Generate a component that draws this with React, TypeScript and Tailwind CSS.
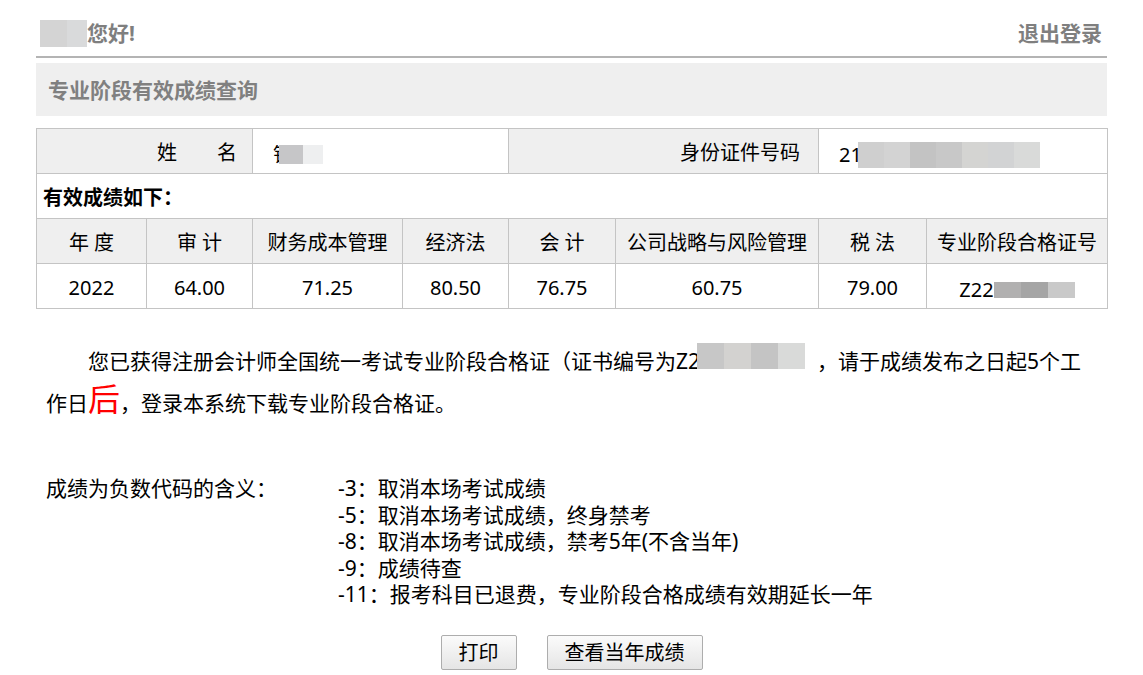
import React from "react";

const FONT = "font-['Noto_Sans','Noto_Sans_CJK_SC',sans-serif]";

function Blocks({ colors, w, h }: { colors: string[]; w: number; h: number }) {
  return (
    <span className="inline-flex align-middle">
      {colors.map((c, i) => (
        <span key={i} style={{ backgroundColor: c, width: w, height: h }} className="inline-block" />
      ))}
    </span>
  );
}

const td = "border border-[#c4c4c4] h-[45px] p-0 pt-[3px] text-[20px] leading-[41px] text-black";

export default function App() {
  return (
    <div className={`${FONT} bg-white w-[1143px] h-[675px] overflow-hidden`}>
      <div className="px-[36px]">
        {/* header */}
        <div className="h-[56px] flex items-center justify-between pl-[4px] pr-[5px] pt-[10px]">
          <div className="flex items-center">
            <span className="inline-block w-[27px] h-[27px] bg-[#d4d4d4]" />
            <span className="inline-block w-[20px] h-[27px] bg-[#d9dadb]" />
            <span className="text-[21px] font-bold text-[#7f7f7f] leading-[28px]">您好!</span>
          </div>
          <span className="text-[21px] font-bold text-[#7f7f7f] leading-[28px]">退出登录</span>
        </div>
        <div className="h-[2px] bg-[#b4b4b4]" />
        <div className="mt-[5px] h-[53px] bg-[#efefef] flex items-center pl-[12px]">
          <span className="text-[21px] font-bold text-[#808080] leading-[28px]">专业阶段有效成绩查询</span>
        </div>

        {/* table */}
        <table className="mt-[12px] w-[1071px] border-collapse table-fixed">
          <colgroup>
            <col className="w-[110px]" />
            <col className="w-[106px]" />
            <col className="w-[150px]" />
            <col className="w-[106px]" />
            <col className="w-[107px]" />
            <col className="w-[203px]" />
            <col className="w-[108px]" />
            <col className="w-[181px]" />
          </colgroup>
          <tbody>
            <tr>
              <td colSpan={2} className={`${td} bg-[#efefef] text-right pr-[15px]`}>
                姓　　名
              </td>
              <td colSpan={2} className={`${td} pl-[20px]`}>
                <span className="inline-flex items-center align-middle">
                  <span className="inline-block w-[6px] overflow-hidden whitespace-nowrap leading-[20px]">钱</span>
                  <span className="inline-block w-[24px] h-[19px] bg-[#c6c6c8]" />
                  <span className="inline-block w-[20px] h-[19px] bg-[#eeeff0]" />
                </span>
              </td>
              <td colSpan={2} className={`${td} bg-[#efefef] text-right pr-[18px]`}>
                身份证件号码
              </td>
              <td colSpan={2} className={`${td} pl-[20px]`}>
                <span className="inline-flex items-center align-middle">
                  <span className="leading-[20px]">21</span>
                  <span className="-ml-[4px] inline-flex">
                    <Blocks
                      colors={["#cfcfcf", "#d3d3d3", "#c3c3c3", "#c8c8c8", "#d4d4d2", "#d2d3d4", "#d9dad9"]}
                      w={26}
                      h={26}
                    />
                  </span>
                </span>
              </td>
            </tr>
            <tr>
              <td colSpan={8} className={`${td} pl-[6px] font-bold`}>
                有效成绩如下：
              </td>
            </tr>
            <tr className="bg-[#efefef]">
              {["年 度", "审 计", "财务成本管理", "经济法", "会 计", "公司战略与风险管理", "税 法", "专业阶段合格证号"].map(
                (t) => (
                  <td key={t} className={`${td} text-center whitespace-nowrap`}>
                    {t}
                  </td>
                )
              )}
            </tr>
            <tr>
              {["2022", "64.00", "71.25", "80.50", "76.75", "60.75", "79.00"].map((t, i) => (
                <td key={i} className={`${td} text-center`}>
                  {t}
                </td>
              ))}
              <td className={`${td} text-center`}>
                <span className="inline-flex items-center align-middle">
                  <span className="leading-[20px]">Z22</span>
                  <Blocks colors={["#b1b0b0", "#a5a5a5", "#c9c9c9"]} w={27} h={16} />
                </span>
              </td>
            </tr>
          </tbody>
        </table>

        {/* paragraph */}
        <div className="mt-[30px] px-[10px] text-[21px] text-black">
          <div className="indent-[42px] whitespace-nowrap leading-[44px]">
            您已获得注册会计师全国统一考试专业阶段合格证（证书编号为Z2
            <span className="-ml-[3px] inline-flex">
              <Blocks colors={["#c7c7c7", "#d3d2d0", "#c4c4c4", "#d9dad9"]} w={27} h={26} />
            </span>
            <span className="inline-block w-[12px]" />，请于成绩发布之日起5个工
          </div>
          <div className="whitespace-nowrap h-[42px] leading-[40px]">
            作日<span className="text-[32px] text-[#ff0000] leading-[1px]">后</span>，登录本系统下载专业阶段合格证。
          </div>
        </div>

        {/* legend */}
        <div className="mt-[50px] pl-[10px] flex text-[21px] leading-[26.5px] text-black">
          <div className="w-[292px] shrink-0">成绩为负数代码的含义：</div>
          <div className="flex flex-col">
            <div>-3：取消本场考试成绩</div>
            <div>-5：取消本场考试成绩，终身禁考</div>
            <div>-8：取消本场考试成绩，禁考5年(不含当年)</div>
            <div>-9：成绩待查</div>
            <div>-11：报考科目已退费，专业阶段合格成绩有效期延长一年</div>
          </div>
        </div>

        {/* buttons */}
        <div className="mt-[27px] flex justify-center gap-[30px]">
          <button className="w-[76px] h-[35px] border border-[#adadad] rounded-[2px] bg-gradient-to-b from-[#fbfbfb] to-[#e5e5e5] text-[20px] leading-[33px] text-black">
            打印
          </button>
          <button className="w-[156px] h-[35px] border border-[#adadad] rounded-[2px] bg-gradient-to-b from-[#fbfbfb] to-[#e5e5e5] text-[20px] leading-[33px] text-black">
            查看当年成绩
          </button>
        </div>
      </div>
    </div>
  );
}
